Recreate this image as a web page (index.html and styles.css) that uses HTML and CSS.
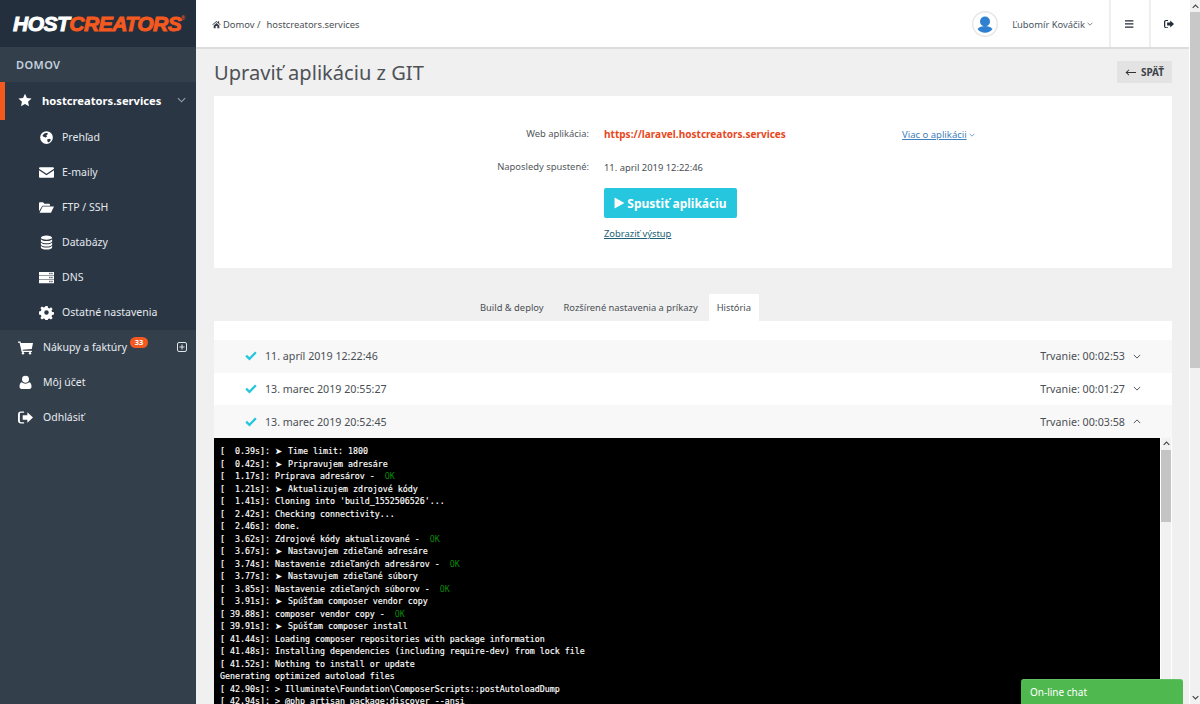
FILE: index.html
```html
<!DOCTYPE html>
<html lang="sk">
<head>
<meta charset="utf-8">
<title>Upraviť aplikáciu z GIT</title>
<link rel="stylesheet" href="styles.css">
</head>
<body>
<div class="app">
  <aside class="sidebar">
    <div class="logo"><span class="logo-w">HOST</span><span class="logo-o">CREATORS</span><sup class="logo-r">®</sup></div>
    <div class="sec-title">DOMOV</div>
    <div class="active-item">
      <svg class="ic star" viewBox="0 0 16 16"><path d="M8 .8l2.2 4.9 5.3.6-4 3.6 1.1 5.3L8 12.5l-4.6 2.7 1.1-5.3-4-3.6 5.3-.6z"/></svg>
      <span class="active-text">hostcreators.services</span>
      <svg class="chev chev-side" viewBox="0 0 10 6"><path d="M1 1l4 4 4-4"/></svg>
    </div>
    <nav class="sub">
      <a class="sub-item"><svg class="ic" viewBox="0 0 16 16"><path fill-rule="evenodd" d="M8 1.2a6.8 6.8 0 1 0 0 13.6A6.8 6.8 0 0 0 8 1.2zM3.600 6.200l2-2.600 3-.6 1 1.200-1.800 1.400.8 1.400-1.400 1-2-.6zM8.600 10l2.600-.8 1.600 1.200-2.200 2.800-1.400-.6z"/></svg><span class="lab">Prehľad</span></a>
      <a class="sub-item"><svg class="ic" viewBox="0 0 16 16"><path d="M0 3.600C0 2.800.6 2.400 1.400 2.400h13.200c.8 0 1.400.4 1.400 1.200v.4L8 9.200 0 4zM0 5.600l8 5.200 8-5.200v6.800c0 .7-.6 1.200-1.400 1.200H1.400C.6 13.600 0 13.100 0 12.400z"/></svg><span class="lab">E-maily</span></a>
      <a class="sub-item"><svg class="ic" viewBox="0 0 16 16"><path d="M0 12V3.500C0 2.900.4 2.500 1 2.500h3.400l1.200 1.400h5.100c.6 0 1 .4 1 1V6H3.600L0 12zM3.900 7H16l-3.200 6.500H.6z"/></svg><span class="lab">FTP / SSH</span></a>
      <a class="sub-item"><svg class="ic" viewBox="0 0 16 16"><ellipse cx="8" cy="2.800" rx="6" ry="2.200"/><path d="M2 4.600C3 6 5.500 6.500 8 6.500s5-.5 6-1.900v2C14 7.800 11.300 8.800 8 8.800S2 7.800 2 6.600zM2 8C3 9.400 5.500 9.900 8 9.900s5-.5 6-1.900v2c0 1.200-2.700 2.200-6 2.200S2 11.200 2 10zM2 11.400c1 1.400 3.500 1.900 6 1.900s5-.5 6-1.900v1.800c0 1.200-2.700 2.200-6 2.200s-6-1-6-2.200z"/></svg><span class="lab">Databázy</span></a>
      <a class="sub-item"><svg class="ic" viewBox="0 0 16 16"><path fill-rule="evenodd" d="M0 2h16v3.600H0zM0 6.200h16v3.600H0zM0 10.400h16V14H0zM11 3h1.200v1.600H11zM13.200 3h1.200v1.600h-1.200zM11 7.200h1.200v1.600H11zM13.200 7.200h1.200v1.600h-1.200zM11 11.400h1.200V13H11zM13.200 11.400h1.200V13h-1.200z"/></svg><span class="lab">DNS</span></a>
      <a class="sub-item"><svg class="ic" viewBox="0 0 16 16"><path fill-rule="evenodd" d="M6.800 1h2.400l.4 2 1.500.6 1.700-1.100 1.700 1.700-1.100 1.700.6 1.500 2 .4v2.400l-2 .4-.6 1.500 1.100 1.700-1.700 1.700-1.700-1.100-1.500.6-.4 2H6.800l-.4-2-1.500-.6-1.700 1.100-1.700-1.700 1.100-1.700-.6-1.500-2-.4V6.800l2-.4.6-1.500-1.100-1.700 1.700-1.700 1.700 1.100 1.500-.6zM8 5.600a2.400 2.400 0 1 0 0 4.800 2.400 2.400 0 0 0 0-4.800z"/></svg><span class="lab">Ostatné nastavenia</span></a>
    </nav>
    <nav class="main-nav">
      <a class="nav-item"><svg class="ic ic-main" viewBox="0 0 16 16"><path d="M0 1.500h2.600l.5 1.600H16l-1.300 6.400-9.800.9.300 1.100h9.600v1.300H3.900L1.700 2.800H0z"/><circle cx="5.300" cy="14.200" r="1.300"/><circle cx="12.800" cy="14.200" r="1.300"/></svg><span class="lab">Nákupy a faktúry</span><span class="badge">33</span><svg class="plus" viewBox="0 0 10 10"><rect x=".5" y=".5" width="9" height="9" rx="1.500"/><path d="M5 2.500v5M2.500 5h5"/></svg></a>
      <a class="nav-item"><svg class="ic ic-main" viewBox="0 0 16 16"><circle cx="8" cy="4.500" r="3.700"/><path d="M4 7.800c1 1 2.500 1.500 4 1.500s3-.5 4-1.500c1.600.4 2.400 2 2.400 4.600 0 1.400-.9 2.400-2.200 2.400H3.800c-1.300 0-2.200-1-2.200-2.400 0-2.600.8-4.200 2.400-4.600z"/></svg><span class="lab">Môj účet</span></a>
      <a class="nav-item"><svg class="ic ic-main" viewBox="0 0 16 16"><path d="M6.500 3H3.200C2.500 3 2 3.500 2 4.200v7.600c0 .7.500 1.200 1.200 1.200h3.300v1.500H3C1.300 14.500 0 13.200 0 11.500v-7C0 2.800 1.300 1.500 3 1.500h3.500z"/><path d="M10 2.500L16 8l-6 5.500v-3H5v-5h5z"/></svg><span class="lab">Odhlásiť</span></a>
    </nav>
  </aside>

  <div class="page">
    <header class="topbar">
      <div class="crumbs"><svg class="home" viewBox="0 0 12 12"><path d="M6 1.200L.4 6l.7.700L6 2.600l4.900 4.100.7-.7L9.500 4.200V1.800H8v1.100zM2.200 7.200V11h2.700V8h2.200v3h2.700V7.200L6 4z"/></svg><span>Domov&nbsp;/</span><span class="crumb-cur">hostcreators.services</span></div>
      <div class="avatar"><svg viewBox="0 0 26 26"><circle cx="13" cy="13" r="12.300" fill="#fff" stroke="#e6e6e6" stroke-width="1.400"/><circle cx="13" cy="10.500" r="5" fill="#2f80d0"/><path d="M5.500 18c2-2.300 4.500-3 7.500-3s5.500.7 7.500 3c-1.800 2.500-4.500 3.800-7.500 3.800S7.300 20.500 5.500 18z" fill="#2f80d0"/></svg></div>
      <div class="user">Ľubomír Kováčik<svg class="chev chev-user" viewBox="0 0 10 6"><path d="M1 1l4 4 4-4"/></svg></div>
      <div class="tool"><svg viewBox="0 0 10 8"><path d="M0 .2h8.400v1.300H0zM0 3.300h8.400v1.300H0zM0 6.400h8.400v1.300H0z"/></svg></div>
      <div class="tool tool-last"><svg viewBox="0 0 16 16"><path d="M6.500 3H3.200C2.500 3 2 3.500 2 4.200v7.600c0 .7.500 1.200 1.200 1.200h3.300v1.500H3C1.300 14.500 0 13.200 0 11.500v-7C0 2.800 1.300 1.500 3 1.500h3.500z"/><path d="M10 2.500L16 8l-6 5.500v-3H5v-5h5z"/></svg></div>
    </header>

    <main class="content">
      <div class="title-row">
        <h1 class="title">Upraviť aplikáciu z GIT</h1>
        <a class="back"><svg viewBox="0 0 11 7"><path d="M11 3H2.500L4.300 1 3.700.4 .5 3.500l3.200 3.100.6-.6L2.500 4H11z"/></svg>SPÄŤ</a>
      </div>

      <section class="card">
        <div class="grid">
          <div class="lbl">Web aplikácia:</div>
          <a class="url">https://laravel.hostcreators.services</a>
          <a class="more"><span class="more-t">Viac o aplikácii</span><svg class="chev chev-user" viewBox="0 0 10 6"><path d="M1 1l4 4 4-4"/></svg></a>
          <div class="lbl lbl2">Naposledy spustené:</div>
          <div class="val2">11. april 2019 12:22:46</div>
        </div>
        <a class="run"><svg viewBox="0 0 10 11"><path d="M.5.500l9 5-9 5z"/></svg>Spustiť aplikáciu</a>
        <a class="output">Zobraziť výstup</a>
      </section>

      <div class="tabs">
        <a class="tab">Build &amp; deploy</a>
        <a class="tab">Rozšírené nastavenia a príkazy</a>
        <a class="tab tab-on">História</a>
      </div>

      <section class="panel">
        <div class="hist alt"><svg class="check" viewBox="0 0 12 10"><path d="M4.500 9.600L.3 5.400l1.700-1.700 2.500 2.500L10 .4l1.700 1.700z"/></svg><span class="date">11. apríl 2019 12:22:46</span><span class="dur">Trvanie: 00:02:53</span><svg class="chev chev-row" viewBox="0 0 10 6"><path d="M1 1l4 4 4-4"/></svg></div>
        <div class="hist"><svg class="check" viewBox="0 0 12 10"><path d="M4.500 9.600L.3 5.400l1.700-1.700 2.500 2.500L10 .4l1.700 1.700z"/></svg><span class="date">13. marec 2019 20:55:27</span><span class="dur">Trvanie: 00:01:27</span><svg class="chev chev-row" viewBox="0 0 10 6"><path d="M1 1l4 4 4-4"/></svg></div>
        <div class="hist alt"><svg class="check" viewBox="0 0 12 10"><path d="M4.500 9.600L.3 5.400l1.700-1.700 2.500 2.500L10 .4l1.700 1.700z"/></svg><span class="date">13. marec 2019 20:52:45</span><span class="dur">Trvanie: 00:03:58</span><svg class="chev chev-row" viewBox="0 0 10 6"><path d="M1 5l4-4 4 4"/></svg></div>
        <div class="log-wrap">
<pre class="log">[  0.39s]: <span class="arr">➤</span> Time limit: 1800
[  0.42s]: <span class="arr">➤</span> Pripravujem adresáre
[  1.17s]: Príprava adresárov -  <span class="ok">OK</span>
[  1.21s]: <span class="arr">➤</span> Aktualizujem zdrojové kódy
[  1.41s]: Cloning into 'build_1552506526'...
[  2.42s]: Checking connectivity...
[  2.46s]: done.
[  3.62s]: Zdrojové kódy aktualizované -  <span class="ok">OK</span>
[  3.67s]: <span class="arr">➤</span> Nastavujem zdieľané adresáre
[  3.74s]: Nastavenie zdieľaných adresárov -  <span class="ok">OK</span>
[  3.77s]: <span class="arr">➤</span> Nastavujem zdieľané súbory
[  3.85s]: Nastavenie zdieľaných súborov -  <span class="ok">OK</span>
[  3.91s]: <span class="arr">➤</span> Spúšťam composer vendor copy
[ 39.88s]: composer vendor copy -  <span class="ok">OK</span>
[ 39.91s]: <span class="arr">➤</span> Spúšťam composer install
[ 41.44s]: Loading composer repositories with package information
[ 41.48s]: Installing dependencies (including require-dev) from lock file
[ 41.52s]: Nothing to install or update
Generating optimized autoload files
[ 42.90s]: &gt; Illuminate\Foundation\ComposerScripts::postAutoloadDump
[ 42.94s]: &gt; @php artisan package:discover --ansi</pre>
          <div class="log-bar">
            <svg class="bar-arrow" viewBox="0 0 10 6"><path d="M1 5l4-4 4 4"/></svg>
            <div class="log-thumb"></div>
          </div>
        </div>
      </section>
    </main>
  </div>

  <div class="page-bar">
    <svg class="bar-arrow bar-top" viewBox="0 0 10 6"><path d="M1 5l4-4 4 4"/></svg>
    <div class="page-thumb"></div>
    <svg class="bar-arrow bar-bottom" viewBox="0 0 10 6"><path d="M1 1l4 4 4-4"/></svg>
  </div>
</div>
<div class="chat">On-line chat</div>
</body>
</html>
```
FILE: styles.css
```css
* { box-sizing: border-box; }
html, body { margin: 0; height: 704px; overflow: hidden; }
body { font-family: "Noto Sans", "Open Sans", sans-serif; font-size: 9.400px; color: #4a4f55; background: #f0f0f0; }
a { color: inherit; text-decoration: none; }
.app { display: flex; height: 704px; }

/* Sidebar */
.sidebar { width: 196px; flex: none; background: #343f4c; color: #fff; display: flex; flex-direction: column; }
.logo { height: 47px; background: #232f3c; padding: 10px 0 0 13px; font-family: "Liberation Sans", sans-serif; font-weight: 700; font-style: italic; font-size: 21px; line-height: 28px; letter-spacing: -.5px; white-space: nowrap; -webkit-text-stroke: 1px currentColor; }
.logo-w { color: #fff; }
.logo-o { color: #f4591f; }
.logo-r { color: #f4591f; font-size: 5px; line-height: 0; vertical-align: 11px; -webkit-text-stroke: 0; font-style: normal; }
.sec-title { height: 35px; padding: 0 0 0 16px; line-height: 35px; font-size: 11px; font-weight: 600; color: #c5d2df; letter-spacing: .4px; }
.active-item { height: 38px; background: #2a3644; border-left: 5px solid #f4591f; display: flex; align-items: center; padding: 0 0 2px 13px; }
.active-text { margin-left: 10px; font-size: 11.200px; font-weight: 700; }
.ic { width: 15px; height: 15px; fill: #fff; flex: none; }
.star { width: 14px; height: 14px; }
.chev { fill: none; stroke: currentColor; stroke-width: 1.200; }
.chev-side { width: 9px; height: 6px; margin-left: 16px; color: #9aa5b1; }
.sub { background: #2a3644; height: 210px; display: flex; flex-direction: column; }
.sub-item { height: 35px; display: flex; align-items: center; padding: 0 0 0 39px; gap: 8px; font-size: 10.500px; color: #e4e9ee; }
.sub-item .lab, .nav-item .lab { position: relative; top: -1px; }
.main-nav { display: flex; flex-direction: column; }
.nav-item { height: 35px; display: flex; align-items: center; padding-left: 18px; font-size: 10.500px; color: #e8ecf0; position: relative; }
.ic-main { margin-right: 10px; }
.badge { position: absolute; left: 130px; top: 7px; background: #f4591f; color: #fff; font-size: 7.500px; font-weight: 700; line-height: 10px; height: 11px; width: 18px; text-align: center; border-radius: 6px; }
.plus { position: absolute; left: 177px; top: 12px; width: 10px; height: 10px; fill: none; stroke: #dfe4e9; stroke-width: 1; }

/* Main */
.page { flex: 1; min-width: 0; display: flex; flex-direction: column; border-right: 1px solid #fff; }
.topbar { height: 49px; flex: none; background: #fff; border-bottom: 2px solid #dcdcdc; display: flex; align-items: center; }
.crumbs { display: flex; align-items: center; margin-left: 16px; padding-top: 2px; flex: 1; color: #4a4f55; }
.home { width: 9px; height: 9px; fill: #3a4048; margin-right: 2px; }
.crumb-cur { margin-left: 6px; }
.avatar { width: 26px; height: 26px; margin-right: 14px; }
.avatar svg { display: block; width: 26px; height: 26px; }
.user { margin-right: 16px; display: flex; align-items: center; color: #4a5663; padding-top: 1px; }
.chev-user { width: 6px; height: 4px; margin-left: 2px; }
.tool { width: 40px; height: 47px; border-left: 2px solid #eee; display: flex; align-items: center; justify-content: center; }
.tool-last { padding-right: 3px; }
.tool svg { width: 10px; height: 8px; fill: #222b36; }
.tool-last svg { width: 10px; height: 10px; }
.content { flex: 1; padding: 0 17px 0 18px; min-height: 0; display: flex; flex-direction: column; }
.title-row { height: 47px; flex: none; display: flex; justify-content: space-between; align-items: flex-start; }
.title { margin: 10px 0 0; font-size: 20.100px; font-weight: 400; line-height: 28px; color: #4d5257; }
.back { margin-top: 12px; height: 22px; width: 55px; background: #e3e3e3; border-radius: 1px; display: flex; align-items: center; justify-content: center; gap: 5px; font-size: 10px; font-weight: 700; color: #3c4249; }
.back svg { width: 11px; height: 7px; fill: #333; }

.card { height: 172px; flex: none; background: #fff; position: relative; padding: 31px 0 0 390px; display: flex; flex-direction: column; align-items: flex-start; }
.grid { display: grid; grid-template-columns: 285px auto; }
.lbl { position: absolute; right: 583px; width: 200px; text-align: right; line-height: 14px; color: #52575c; }
.lbl2 { top: 64px; }
.url { font-size: 10.050px; line-height: 14px; font-weight: 700; color: #e8481c; height: 14px; }
.more { font-size: 9.500px; line-height: 14px; color: #3f80bd; display: flex; align-items: center; height: 14px; margin-left: 13px; margin-top: 1px; }
.more-t { text-decoration: underline; }
.val2 { margin-top: 19px; line-height: 14px; color: #4a4f55; }
.run { margin-top: 13px; width: 133px; height: 30px; background: #25c6de; border-radius: 2px; color: #fff; font-size: 12px; font-weight: 700; display: flex; align-items: center; justify-content: center; gap: 2px; }
.run svg { width: 11px; height: 12px; fill: #fff; }
.output { margin-top: 9px; line-height: 14px; color: #1d6272; text-decoration: underline; }

.tabs { height: 53px; flex: none; display: flex; align-items: flex-end; padding-left: 256px; }
.tab { height: 27px; padding: 0 10px; line-height: 28px; font-size: 9.350px; color: #4a4f55; }
.tab-on { background: #fff; padding: 0 8px; margin-left: 1px; }

.panel { flex: 1; min-height: 0; background: #fff; padding-top: 19px; display: flex; flex-direction: column; }
.hist { height: 32.670px; flex: none; display: flex; align-items: center; padding: 0 0 0 31px; font-size: 10.700px; color: #4a4f55; }
.hist.alt { background: #f8f8f8; }
.check { width: 12px; height: 10px; fill: #25c6de; flex: none; }
.date { margin-left: 8px; flex: 1; }
.chev-row { width: 8px; height: 5px; margin: 0 31px 0 8px; }
.log-wrap { flex: 1; min-height: 0; display: flex; background: #fff; overflow: hidden; }
.log { flex: 1; margin: 0; background: #000; color: #fff; padding: 7.400px 0 0 6px; font-family: "DejaVu Sans Mono", monospace; font-size: 8.300px; line-height: 12.500px; white-space: pre; overflow: hidden; -webkit-text-stroke: .15px #fff; }
.arr { display: inline-block; width: 8px; font-family: "DejaVu Sans", sans-serif; }
.ok { color: #0a8a0a; -webkit-text-stroke: 0; }
.log-bar { width: 10px; flex: none; margin: 0 1px; background: #f1f1f1; display: flex; flex-direction: column; align-items: center; }
.bar-arrow { width: 7px; height: 5px; fill: none; stroke: #444; stroke-width: 1.600; flex: none; margin-top: 3px; }
.log-thumb { width: 100%; height: 72px; margin-top: 4px; background: #c4c4c4; }

.page-bar { width: 10px; flex: none; background: #f1f1f1; display: flex; flex-direction: column; align-items: center; }
.page-thumb { width: 100%; height: 356px; flex: none; margin-top: 3px; background: #c8c8c8; }
.bar-top { margin-top: 4px; }
.bar-bottom { margin-top: auto; margin-bottom: 4px; }

.chat { position: fixed; left: 1021px; top: 679px; width: 162px; height: 25px; background: #4fb84f; border-radius: 3px 3px 0 0; color: #fff; font-size: 10px; line-height: 25px; padding-left: 9px; border-top: 1px solid #62c162; }
```
